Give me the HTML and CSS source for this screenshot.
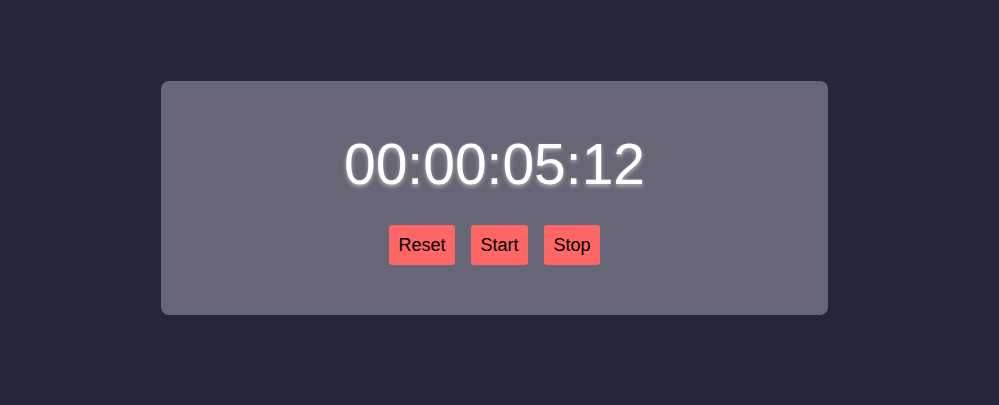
FILE: index.html
```html
<!DOCTYPE html>
<html>
<head>
<meta charset="utf-8">
<link rel="stylesheet" href="styles.css">
</head>
<body>
<div class="card">
  <div class="time">00:00:05:12</div>
  <div class="controls">
    <button class="btn">Reset</button>
    <button class="btn">Start</button>
    <button class="btn">Stop</button>
  </div>
</div>
</body>
</html>
```
FILE: styles.css
```css
html, body {
  margin: 0;
  padding: 0;
  background: #25263a;
  height: 100%;
  font-family: "Liberation Sans", Arial, sans-serif;
}
body {
  padding-top: 81px;
  padding-left: 161px;
  box-sizing: border-box;
}
.card {
  width: 667px;
  height: 234px;
  box-sizing: border-box;
  background: #666677;
  border-radius: 8px;
  padding-top: 50px;
  display: flex;
  flex-direction: column;
  align-items: center;
}
.time {
  color: #ffffff;
  font-size: 57px;
  line-height: 67px;
  text-shadow: 0 2px 4px rgba(235, 230, 220, 0.6);
}
.controls {
  margin-top: 27px;
  display: flex;
  gap: 16px;
}
.btn {
  font-family: "Liberation Sans", Arial, sans-serif;
  font-size: 18px;
  line-height: 20px;
  padding: 10px 9.5px;
  border: none;
  border-radius: 3px;
  background: #ff6666;
  color: #000;
}
```
